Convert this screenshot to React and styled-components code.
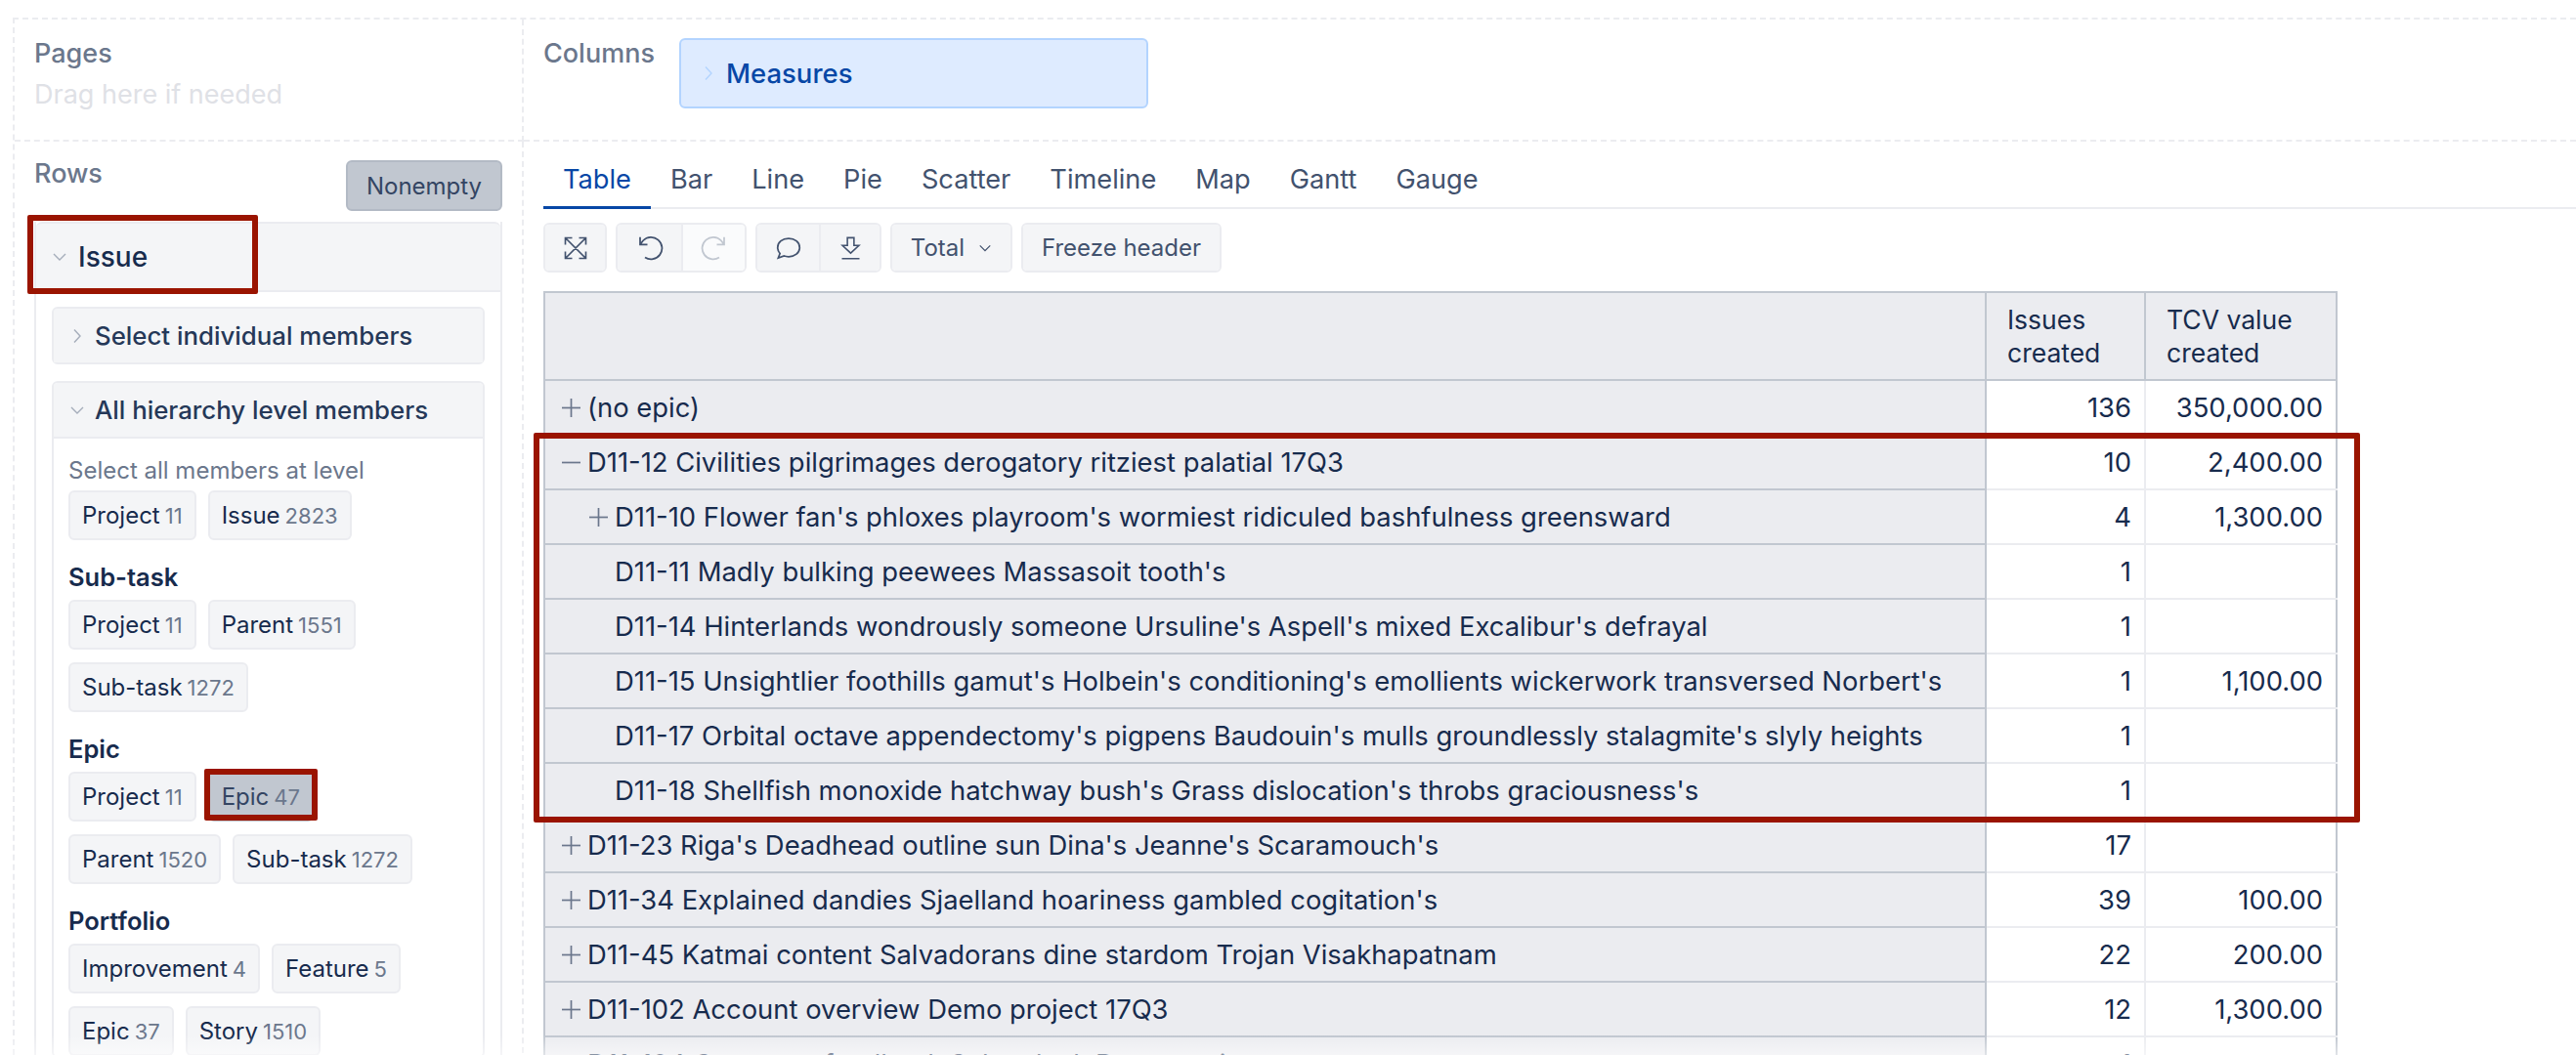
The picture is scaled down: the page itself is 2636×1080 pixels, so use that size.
import React from "react";
import styled, { createGlobalStyle } from "styled-components";

const GlobalStyle = createGlobalStyle`
  html, body {
    margin: 0;
    padding: 0;
    background: #fff;
  }
  body {
    font-family: Inter, "Noto Sans", "Liberation Sans", sans-serif;
    color: #172b4d;
  }
  * {
    box-sizing: border-box;
  }
`;

const rows = [
  { label: "(no epic)", icon: "plus", issues: "136", tcv: "350,000.00" },
  { label: "D11-12 Civilities pilgrimages derogatory ritziest palatial 17Q3", icon: "minus", issues: "10", tcv: "2,400.00" },
  { label: "D11-10 Flower fan's phloxes playroom's wormiest ridiculed bashfulness greensward", icon: "plus", indent: true, issues: "4", tcv: "1,300.00" },
  { label: "D11-11 Madly bulking peewees Massasoit tooth's", indent: true, issues: "1" },
  { label: "D11-14 Hinterlands wondrously someone Ursuline's Aspell's mixed Excalibur's defrayal", indent: true, issues: "1" },
  { label: "D11-15 Unsightlier foothills gamut's Holbein's conditioning's emollients wickerwork transversed Norbert's", indent: true, issues: "1", tcv: "1,100.00" },
  { label: "D11-17 Orbital octave appendectomy's pigpens Baudouin's mulls groundlessly stalagmite's slyly heights", indent: true, issues: "1" },
  { label: "D11-18 Shellfish monoxide hatchway bush's Grass dislocation's throbs graciousness's", indent: true, issues: "1" },
  { label: "D11-23 Riga's Deadhead outline sun Dina's Jeanne's Scaramouch's", icon: "plus", issues: "17" },
  { label: "D11-34 Explained dandies Sjaelland hoariness gambled cogitation's", icon: "plus", issues: "39", tcv: "100.00" },
  { label: "D11-45 Katmai content Salvadorans dine stardom Trojan Visakhapatnam", icon: "plus", issues: "22", tcv: "200.00" },
  { label: "D11-102 Account overview Demo project 17Q3", icon: "plus", issues: "12", tcv: "1,300.00" },
  { label: "D11-104 Customer feedback Sales deck Demo project", icon: "plus", issues: "1" },
];

const tabs = ["Table", "Bar", "Line", "Pie", "Scatter", "Timeline", "Map", "Gantt", "Gauge"];

const levels = [
  { items: [["Project", "11"], ["Issue", "2823"]] },
  { title: "Sub-task", items: [["Project", "11"], ["Parent", "1551"], ["Sub-task", "1272"]] },
  { title: "Epic", items: [["Project", "11"], ["Epic", "47", true], ["Parent", "1520"], ["Sub-task", "1272"]] },
  { title: "Portfolio", items: [["Improvement", "4"], ["Feature", "5"], ["Epic", "37"], ["Story", "1510"]] },
];

const Chevron = ({ open, color = "#a5adba", size = 16 }) => (
  <svg width={size} height={size} viewBox="0 0 16 16" fill="none" stroke={color} strokeWidth="1.4">
    {open ? <path d="M2 5l6 6 6-6" /> : <path d="M5 1.500l6 6.500-6 6.500" />}
  </svg>
);

const TreeIcon = ({ kind }) => (
  <svg width="19" height="19" viewBox="0 0 19 19" fill="none" stroke="#6b778c" strokeWidth="1.7">
    <path d="M0 9.500h19" />
    {kind === "plus" && <path d="M9.500 0v19" />}
  </svg>
);

const ToolIcon = ({ children, color = "#42526e", size = 30 }) => (
  <svg width={size} height={size} viewBox="0 0 24 24" fill="none" stroke={color} strokeWidth="1.4">
    {children}
  </svg>
);

const Page = styled.div`
  position: relative;
  width: 2636px;
  height: 1080px;
  overflow: hidden;
  padding: 18px 0 0 13px;
`;

const Grid = styled.div`
  display: grid;
  grid-template-columns: 521px 1fr;
  grid-template-rows: 125px 1fr;
  height: 1062px;
  border-top: 2px dashed #ebecf0;
  border-left: 2px dashed #ebecf0;
`;

const TopCell = styled.div`
  border-bottom: 2px dashed #ebecf0;
  border-right: ${(p) => (p.$last ? "none" : "2px dashed #ebecf0")};
  padding: 19px 0 0 20px;
  display: ${(p) => (p.$last ? "flex" : "block")};
  align-items: flex-start;
`;

const SideCell = styled.div`
  border-right: 2px dashed #ebecf0;
  padding: 17px 20px 0 20px;
`;

const MainCell = styled.div`
  padding: 0 0 0 20px;
`;

const AreaLabel = styled.div`
  font-size: 27px;
  line-height: 32px;
  font-weight: 500;
  color: #6b778c;
`;

const Hint = styled.div`
  font-size: 27px;
  line-height: 32px;
  margin-top: 10px;
  color: #dfe1e6;
`;

const MeasuresChip = styled.div`
  width: 480px;
  height: 72px;
  margin: 0 0 0 25px;
  display: flex;
  align-items: center;
  gap: 10px;
  padding-left: 20px;
  background: #deebff;
  border: 2px solid #b3d4ff;
  border-radius: 6px;
  color: #0747a6;
  font-size: 27.500px;
  font-weight: 500;
`;

const RowsHead = styled.div`
  display: flex;
  justify-content: space-between;
  align-items: flex-start;
  height: 65px;
`;

const NonemptyButton = styled.div`
  width: 160px;
  height: 52px;
  margin-top: 2px;
  display: flex;
  align-items: center;
  justify-content: center;
  background: #c1c7d0;
  border: 2px solid #b3bac5;
  border-radius: 6px;
  font-size: 24px;
  color: #344563;
`;

const Panel = styled.div`
  border-left: 2px solid #ebecf0;
  border-right: 2px solid #ebecf0;
`;

const PanelHead = styled.div`
  position: relative;
  height: 72px;
  display: flex;
  align-items: center;
  gap: 11px;
  padding-left: 16px;
  background: #f4f5f7;
  border-top: 2px solid #ebecf0;
  border-bottom: 2px solid #ebecf0;
  border-radius: 6px 6px 0 0;
  font-size: 28px;
  font-weight: 500;
`;

const RedBox = styled.div`
  position: absolute;
  border: 6px solid #9a1400;
  border-radius: 2px;
  pointer-events: none;
`;

const IssueBox = styled(RedBox)`
  left: -9px;
  top: -9px;
  width: 236px;
  height: 81px;
`;

const PanelBody = styled.div`
  padding: 15px 16px 0;
`;

const Accordion = styled.div`
  margin-bottom: 17px;
  border: 2px solid #ebecf0;
  border-radius: 6px;
  background: ${(p) => (p.$open ? "#fff" : "#f4f5f7")};
`;

const AccordionHead = styled.div`
  height: ${(p) => (p.$open ? "57px" : "55px")};
  display: flex;
  align-items: center;
  gap: 10px;
  padding-left: 16px;
  background: #f4f5f7;
  border-bottom: ${(p) => (p.$open ? "2px solid #ebecf0" : "none")};
  border-radius: 4px 4px 0 0;
  font-size: 25.800px;
  font-weight: 500;
  color: #253858;
`;

const AccordionBody = styled.div`
  padding: 16px 15px 0;
`;

const Sublabel = styled.div`
  font-size: 24px;
  line-height: 34px;
  margin-bottom: 3px;
  color: #6b778c;
`;

const LevelTitle = styled.div`
  font-size: 25.500px;
  line-height: 34px;
  font-weight: 600;
  margin: 21px 0 6px;
  color: #172b4d;
`;

const ChipWrap = styled.div`
  display: flex;
  flex-wrap: wrap;
  gap: 13px 12px;
`;

const Chip = styled.div`
  position: relative;
  height: 51px;
  display: flex;
  align-items: center;
  gap: 5px;
  padding: 0 12px;
  background: ${(p) => (p.$selected ? "#c1c7d0" : "#f4f5f7")};
  border: 2px solid ${(p) => (p.$selected ? "#c1c7d0" : "#ebecf0")};
  border-radius: 6px;
  font-size: 24px;
  color: ${(p) => (p.$selected ? "#344563" : "#172b4d")};
`;

const ChipCount = styled.span`
  font-size: 22px;
  color: #6b778c;
`;

const ChipBox = styled(RedBox)`
  inset: -5px -6px -1px -6px;
`;

const Tabs = styled.div`
  display: flex;
  height: 69px;
  border-bottom: 2px solid #ebecf0;
`;

const Tab = styled.div`
  padding: 23px 20px 0;
  height: 69px;
  font-size: 27.200px;
  line-height: 32px;
  color: ${(p) => (p.$active ? "#0747a6" : "#42526e")};
  border-bottom: 3px solid ${(p) => (p.$active ? "#0747a6" : "transparent")};
`;

const Toolbar = styled.div`
  display: flex;
  gap: 9px;
  margin: 14px 0 19px;
`;

const ToolGroup = styled.div`
  display: flex;
  height: 51px;
  border: 2px solid #ebecf0;
  border-radius: 6px;
  overflow: hidden;
`;

const ToolButton = styled.div`
  width: ${(p) => p.$width || 65}px;
  display: flex;
  align-items: center;
  justify-content: center;
  gap: 14px;
  background: ${(p) => (p.$disabled ? "#fafbfc" : "#f4f5f7")};
  & + & {
    border-left: 2px solid #ebecf0;
  }
  font-size: 24px;
  color: #42526e;
`;

const TableWrap = styled.div`
  position: relative;
  width: 1834px;
`;

const BigBox = styled(RedBox)`
  left: -10px;
  top: 145px;
  width: 1869px;
  height: 399px;
`;

const PivotTable = styled.table`
  width: 1834px;
  table-layout: fixed;
  border-collapse: collapse;
  font-size: 27.400px;
`;

const HeadCell = styled.th`
  height: 90px;
  padding: 0 0 0 21px;
  background: #ebecf0;
  border: 2px solid #c1c7d0;
  font-weight: 400;
  font-size: 26.500px;
  line-height: 34px;
  text-align: left;
  color: #172b4d;
`;

const RowHead = styled.td`
  height: 56px;
  padding: 0;
  background: #ebecf0;
  border-left: 2px solid #c1c7d0;
  border-right: 2px solid #c1c7d0;
  border-bottom: 2px solid #c1c7d0;
`;

const RowLabel = styled.div`
  display: flex;
  align-items: center;
  white-space: nowrap;
  padding-left: ${(p) => (p.$indent ? "45px" : "17px")};
`;

const IconSlot = styled.span`
  display: flex;
  width: 26px;
  flex: none;
`;

const ValueCell = styled.td`
  height: 56px;
  padding: 0 13px 0 0;
  text-align: right;
  background: #fff;
  border-bottom: 2px solid #ebecf0;
  border-right: 2px solid ${(p) => (p.$last ? "#c1c7d0" : "#ebecf0")};
`;

const BottomFade = styled.div`
  position: absolute;
  left: 0;
  right: 0;
  bottom: 0;
  height: 20px;
  background: linear-gradient(rgba(255, 255, 255, 0), rgba(255, 255, 255, 0.5));
  pointer-events: none;
`;

const LevelChip = ({ name, count, selected }) => (
  <Chip $selected={selected}>
    {name}
    <ChipCount>{count}</ChipCount>
    {selected && <ChipBox />}
  </Chip>
);

const App = () => (
  <>
    <GlobalStyle />
    <Page>
      <Grid>
        <TopCell>
          <AreaLabel>Pages</AreaLabel>
          <Hint>Drag here if needed</Hint>
        </TopCell>
        <TopCell $last>
          <AreaLabel>Columns</AreaLabel>
          <MeasuresChip>
            <Chevron color="#b3d4ff" />
            Measures
          </MeasuresChip>
        </TopCell>
        <SideCell>
          <RowsHead>
            <AreaLabel>Rows</AreaLabel>
            <NonemptyButton>Nonempty</NonemptyButton>
          </RowsHead>
          <Panel>
            <PanelHead>
              <Chevron open />
              Issue
              <IssueBox />
            </PanelHead>
            <PanelBody>
              <Accordion>
                <AccordionHead>
                  <Chevron />
                  Select individual members
                </AccordionHead>
              </Accordion>
              <Accordion $open>
                <AccordionHead $open>
                  <Chevron open />
                  All hierarchy level members
                </AccordionHead>
                <AccordionBody>
                  <Sublabel>Select all members at level</Sublabel>
                  {levels.map((level, i) => (
                    <div key={i}>
                      {level.title && <LevelTitle>{level.title}</LevelTitle>}
                      <ChipWrap>
                        {level.items.map(([name, count, selected]) => (
                          <LevelChip key={name} name={name} count={count} selected={selected} />
                        ))}
                      </ChipWrap>
                    </div>
                  ))}
                </AccordionBody>
              </Accordion>
            </PanelBody>
          </Panel>
        </SideCell>
        <MainCell>
          <Tabs>
            {tabs.map((tab, i) => (
              <Tab key={tab} $active={i === 0}>
                {tab}
              </Tab>
            ))}
          </Tabs>
          <Toolbar>
            <ToolGroup>
              <ToolButton $width={61}>
                <ToolIcon size={28}>
                  <path d="M3 3l18 18M21 3L3 21M3 9V3h6M15 3h6v6M3 15v6h6M21 15v6h-6" />
                </ToolIcon>
              </ToolButton>
            </ToolGroup>
            <ToolGroup>
              <ToolButton>
                <ToolIcon>
                  <path d="M8 19.600A9 9 0 1 0 6.500 5.800L4 9M4 3v6h6" />
                </ToolIcon>
              </ToolButton>
              <ToolButton $disabled>
                <ToolIcon color="#c1c7d0">
                  <path d="M16 19.600A9 9 0 1 1 17.500 5.800L20 9M20 3v6h-6" />
                </ToolIcon>
              </ToolButton>
            </ToolGroup>
            <ToolGroup>
              <ToolButton $width={63}>
                <ToolIcon>
                  <path d="M12 4c5 0 9 3 9 7.500S17 19 12 19c-1.300 0-2.600-.2-3.700-.6L3.500 20l1.400-3.600C3.700 15 3 13.300 3 11.500 3 7 7 4 12 4z" />
                </ToolIcon>
              </ToolButton>
              <ToolButton $width={62}>
                <ToolIcon size={27}>
                  <path d="M9 3h6v7h4.500L12 17 4.500 10H9zM4 22h16" />
                </ToolIcon>
              </ToolButton>
            </ToolGroup>
            <ToolGroup>
              <ToolButton $width={121}>
                Total
                <Chevron open color="#42526e" size={14} />
              </ToolButton>
            </ToolGroup>
            <ToolGroup>
              <ToolButton $width={201}>Freeze header</ToolButton>
            </ToolGroup>
          </Toolbar>
          <TableWrap>
            <PivotTable>
              <colgroup>
                <col style={{ width: 1475 }} />
                <col style={{ width: 163 }} />
                <col style={{ width: 196 }} />
              </colgroup>
              <thead>
                <tr>
                  <HeadCell />
                  <HeadCell>Issues<br />created</HeadCell>
                  <HeadCell>TCV value<br />created</HeadCell>
                </tr>
              </thead>
              <tbody>
                {rows.map((row) => (
                  <tr key={row.label}>
                    <RowHead>
                      <RowLabel $indent={row.indent}>
                        <IconSlot>{row.icon && <TreeIcon kind={row.icon} />}</IconSlot>
                        {row.label}
                      </RowLabel>
                    </RowHead>
                    <ValueCell>{row.issues}</ValueCell>
                    <ValueCell $last>{row.tcv}</ValueCell>
                  </tr>
                ))}
              </tbody>
            </PivotTable>
            <BigBox />
          </TableWrap>
        </MainCell>
      </Grid>
      <BottomFade />
    </Page>
  </>
);

export default App;
